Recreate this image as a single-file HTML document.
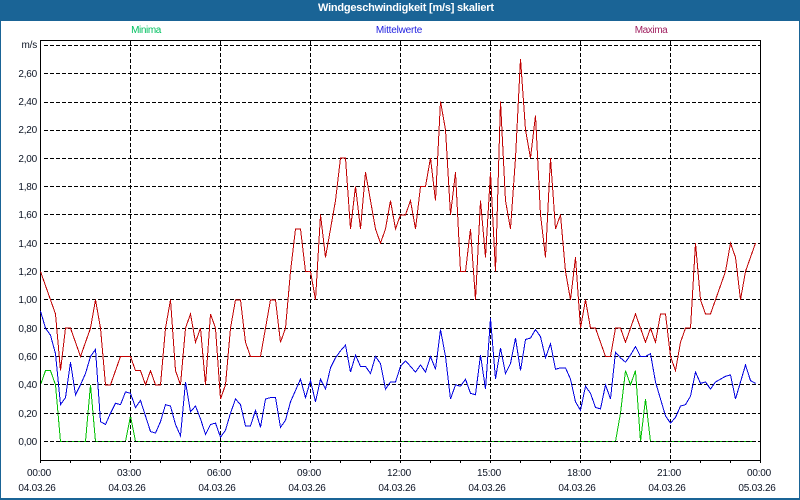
<!DOCTYPE html>
<html><head><meta charset="utf-8"><style>
html,body{margin:0;padding:0}
body{width:800px;height:500px;background:#fff;overflow:hidden;position:relative;font-family:"Liberation Sans",sans-serif;font-size:10px;color:#0c1424}
.t{position:absolute;white-space:pre;line-height:12px;height:12px;letter-spacing:-.2px}
.c{transform:translateX(-50%)}
.r{text-align:right;width:37px;left:0}
#bar{position:absolute;left:0;top:0;width:800px;height:21px;background:#1a6496;color:#fff;font:bold 11px/15px "Liberation Sans",sans-serif;text-align:center}
#bar span{position:absolute;left:318px;top:1px;white-space:pre;letter-spacing:-.22px}
svg{position:absolute;left:0;top:0}
</style></head><body>
<svg width="800" height="500" viewBox="0 0 800 500" shape-rendering="crispEdges" fill="none">
<rect x="0" y="21" width="1" height="479" fill="#1a6496"/>
<rect x="799" y="21" width="1" height="479" fill="#1a6496"/>
<rect x="0" y="498" width="800" height="2" fill="#1a6496"/>
<g transform="translate(40.5,441.5) scale(5,-141.7)" stroke="#00c000" stroke-width="1">
<polyline vector-effect="non-scaling-stroke" points="0,.4 1,.5 2,.5 3,.4 4,0 9,0 10,.4 11,0 17,0 18,.18 19,0 115,0 116,.2 117,.5 118,.4 119,.5 120,0 121,.3 122,0 143,0"/>
</g>
<g stroke="#000" stroke-width="1" stroke-dasharray="4 2">
<path d="M44 45.5H760M44 73.5H760M44 102.5H760M44 130.5H760M44 158.5H760M44 186.5H760M44 214.5H760M44 243.5H760M44 271.5H760M44 299.5H760M44 328.5H760M44 356.5H760M44 384.5H760M44 413.5H760M44 441.5H760"/>
<path d="M130.5 41V460M220.5 41V460M310.5 41V460M400.5 41V460M490.5 41V460M580.5 41V460M670.5 41V460"/>
</g>
<path stroke="#000" d="M40.5 40V463M760.5 40V463M40 40.5H761M40 460.5H761M70.5 460V463M100.5 460V463M130.5 460V463M160.5 460V463M190.5 460V463M220.5 460V463M250.5 460V463M280.5 460V463M310.5 460V463M340.5 460V463M370.5 460V463M400.5 460V463M430.5 460V463M460.5 460V463M490.5 460V463M520.5 460V463M550.5 460V463M580.5 460V463M610.5 460V463M640.5 460V463M670.5 460V463M700.5 460V463M730.5 460V463"/>
<g transform="translate(40.5,441.5) scale(5,-141.7)" stroke-width="1">
<polyline vector-effect="non-scaling-stroke" stroke="#c00000" points="0,1.2 1,1.1 2,1 3,.9 4,.5 5,.8 6,.8 7,.7 8,.6 9,.7 10,.8 11,1 12,.8 13,.4 14,.4 15,.5 16,.6 17,.6 18,.6 19,.5 20,.5 21,.4 22,.5 23,.4 24,.4 25,.8 26,1 27,.5 28,.4 29,.8 30,.9 31,.7 32,.8 33,.4 34,.9 35,.8 36,.3 37,.4 38,.8 39,1 40,1 41,.7 42,.6 43,.6 44,.6 45,.8 46,1 47,1 48,.7 49,.8 50,1.2 51,1.5 52,1.5 53,1.2 54,1.2 55,1 56,1.6 57,1.3 58,1.5 59,1.7 60,2 61,2 62,1.5 63,1.8 64,1.5 65,1.9 66,1.7 67,1.5 68,1.4 69,1.5 70,1.7 71,1.5 72,1.6 73,1.6 74,1.7 75,1.5 76,1.8 77,1.8 78,2 79,1.7 80,2.4 81,2.2 82,1.6 83,1.9 84,1.2 85,1.2 86,1.5 87,1 88,1.7 89,1.3 90,1.9 91,1.2 92,2.4 93,1.7 94,1.5 95,2 96,2.7 97,2.2 98,2 99,2.3 100,1.6 101,1.3 102,2 103,1.5 104,1.6 105,1.2 106,1 107,1.3 108,.8 109,1 110,.8 111,.8 112,.7 113,.6 114,.6 115,.8 116,.8 117,.7 118,.8 119,.9 120,.8 121,.7 122,.8 123,.7 124,.9 125,.9 126,.6 127,.5 128,.7 129,.8 130,.8 131,1.4 132,1 133,.9 134,.9 135,1 136,1.1 137,1.2 138,1.4 139,1.3 140,1 141,1.2 142,1.3 143,1.4"/>
<polyline vector-effect="non-scaling-stroke" stroke="#0000e0" points="0,.92 1,.8 2,.75 3,.62 4,.26 5,.31 6,.56 7,.33 8,.4 9,.48 10,.6 11,.65 12,.14 13,.12 14,.2 15,.27 16,.26 17,.35 18,.34 19,.24 20,.29 21,.18 22,.07 23,.06 24,.14 25,.26 26,.25 27,.12 28,.04 29,.42 30,.21 31,.25 32,.16 33,.05 34,.12 35,.13 36,.03 37,.08 38,.2 39,.3 40,.26 41,.11 42,.11 43,.22 44,.1 45,.3 46,.31 47,.31 48,.1 49,.15 50,.28 51,.36 52,.44 53,.31 54,.43 55,.28 56,.44 57,.37 58,.52 59,.59 60,.64 61,.68 62,.49 63,.61 64,.53 65,.53 66,.48 67,.6 68,.55 69,.37 70,.42 71,.42 72,.53 73,.57 74,.53 75,.49 76,.54 77,.49 78,.6 79,.51 80,.79 81,.6 82,.3 83,.4 84,.39 85,.44 86,.34 87,.33 88,.61 89,.37 90,.87 91,.44 92,.66 93,.48 94,.55 95,.73 96,.5 97,.72 98,.73 99,.79 100,.74 101,.59 102,.69 103,.51 104,.52 105,.52 106,.44 107,.28 108,.22 109,.39 110,.34 111,.24 112,.23 113,.4 114,.3 115,.63 116,.59 117,.56 118,.61 119,.67 120,.6 121,.6 122,.62 123,.42 124,.3 125,.18 126,.13 127,.17 128,.25 129,.26 130,.32 131,.49 132,.41 133,.42 134,.37 135,.42 136,.44 137,.46 138,.47 139,.3 140,.42 141,.54 142,.43 143,.41"/>
</g>
</svg>
<div id="bar"><span>Windgeschwindigkeit [m/s] skaliert</span></div>
<div class="t c" style="left:146px;top:25px;color:#00c060;letter-spacing:-.4px">Minima</div>
<div class="t c" style="left:399px;top:25px;color:#2020e0">Mittelwerte</div>
<div class="t c" style="left:651px;top:25px;color:#a02060;letter-spacing:-.4px">Maxima</div>
<div class="t r" style="top:40px">m/s</div>
<div class="t r" style="top:69px">2,60</div>
<div class="t r" style="top:97px">2,40</div>
<div class="t r" style="top:125px">2,20</div>
<div class="t r" style="top:154px">2,00</div>
<div class="t r" style="top:182px">1,80</div>
<div class="t r" style="top:210px">1,60</div>
<div class="t r" style="top:239px">1,40</div>
<div class="t r" style="top:267px">1,20</div>
<div class="t r" style="top:295px">1,00</div>
<div class="t r" style="top:324px">0,80</div>
<div class="t r" style="top:352px">0,60</div>
<div class="t r" style="top:380px">0,40</div>
<div class="t r" style="top:409px">0,20</div>
<div class="t r" style="top:437px">0,00</div>
<div class="t c" style="left:39px;top:468px">00:00</div><div class="t c" style="left:37px;top:483px">04.03.26</div>
<div class="t c" style="left:129px;top:468px">03:00</div><div class="t c" style="left:127px;top:483px">04.03.26</div>
<div class="t c" style="left:219px;top:468px">06:00</div><div class="t c" style="left:217px;top:483px">04.03.26</div>
<div class="t c" style="left:309px;top:468px">09:00</div><div class="t c" style="left:307px;top:483px">04.03.26</div>
<div class="t c" style="left:399px;top:468px">12:00</div><div class="t c" style="left:397px;top:483px">04.03.26</div>
<div class="t c" style="left:489px;top:468px">15:00</div><div class="t c" style="left:487px;top:483px">04.03.26</div>
<div class="t c" style="left:579px;top:468px">18:00</div><div class="t c" style="left:577px;top:483px">04.03.26</div>
<div class="t c" style="left:669px;top:468px">21:00</div><div class="t c" style="left:667px;top:483px">04.03.26</div>
<div class="t c" style="left:759px;top:468px">00:00</div><div class="t c" style="left:757px;top:483px">05.03.26</div>
</body></html>
